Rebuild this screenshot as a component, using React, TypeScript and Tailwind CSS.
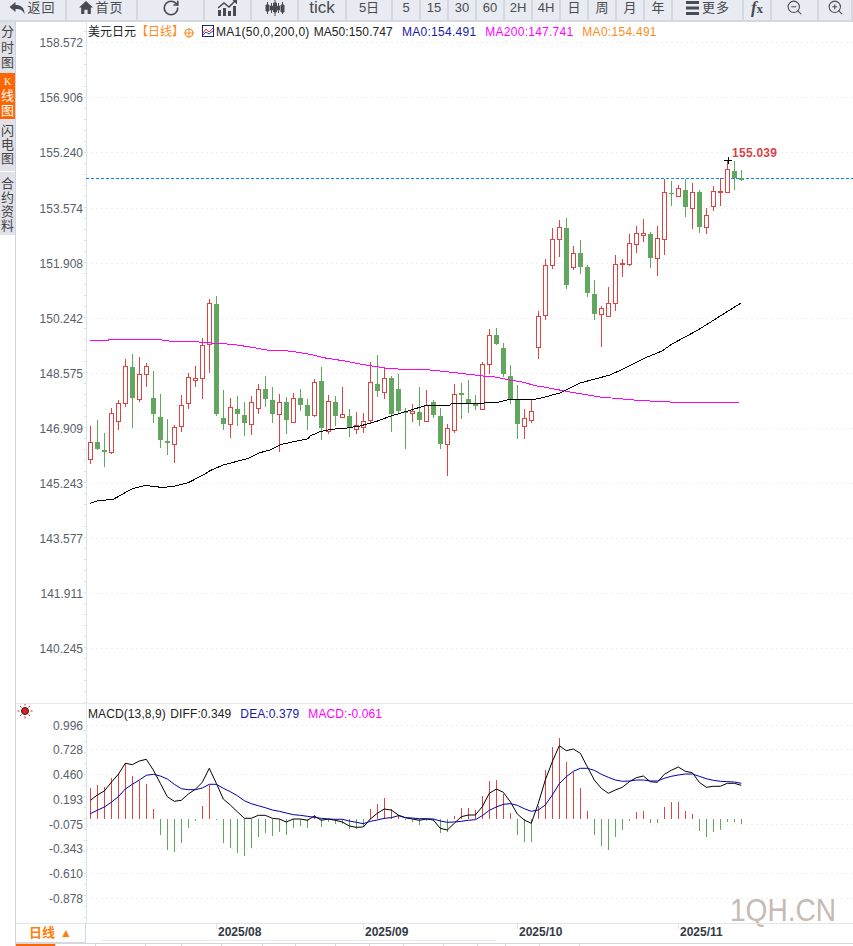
import type { ReactNode } from 'react';
import { RotateCw, ZoomIn, ZoomOut } from 'lucide-react';

const RED = '#dc4444';
const GREEN = '#62a75e';
const SANS = 'font-["Liberation_Sans","Noto_Sans_CJK_SC",sans-serif]';

// candle values are read off the picture: up/down, high, body top, body bottom, low
type Candle = [0 | 1, number, number, number, number];

const fromA = (rows: Candle[]): Candle[] =>
  rows.map(([c, h, t, b, l]) => [c, 290 + h / 3, 290 + t / 3, 290 + b / 3, 290 + l / 3]);
const fromB = (rows: Candle[]): Candle[] =>
  rows.map(([c, h, t, b, l]) => [c, 140 + h / 3, 140 + t / 3, 140 + b / 3, 140 + l / 3]);

const candles: Candle[] = [
  ...fromA([
    [1, 408, 457, 506, 522], [0, 390, 457, 477, 480], [0, 430, 481, 485, 530], [1, 355, 370, 485, 492],
    [1, 330, 340, 394, 420], [1, 207, 229, 340, 351], [0, 192, 232, 323, 414], [1, 201, 253, 328, 336],
    [1, 220, 229, 253, 291], [0, 243, 324, 371, 399], [0, 312, 381, 449, 474], [0, 387, 453, 458, 495],
    [1, 405, 412, 463, 519], [1, 315, 346, 409, 426], [1, 250, 262, 340, 357], [1, 228, 265, 269, 291],
    [1, 145, 166, 265, 327], [1, 27, 40, 163, 249], [0, 18, 42, 372, 378], [0, 300, 384, 401, 420],
    [1, 324, 352, 403, 444], [0, 318, 357, 371, 408], [0, 336, 375, 398, 438], [1, 318, 337, 401, 435],
    [1, 282, 298, 355, 372], [0, 258, 297, 326, 351], [0, 291, 330, 371, 399], [1, 312, 337, 371, 486],
    [0, 321, 336, 389, 432], [1, 309, 325, 395, 399], [0, 297, 324, 345, 363], [0, 327, 345, 378, 420],
    [1, 267, 277, 376, 381], [0, 231, 273, 414, 450], [1, 315, 334, 423, 432], [0, 318, 336, 378, 408],
    [1, 291, 373, 380, 381], [0, 357, 378, 414, 441], [1, 366, 406, 418, 432], [1, 369, 394, 412, 429],
    [1, 216, 277, 391, 399], [0, 195, 282, 303, 321], [1, 232, 265, 307, 327], [0, 258, 264, 372, 426],
    [0, 252, 297, 363, 372], [0, 354, 366, 367, 477], [1, 342, 363, 368, 396], [0, 291, 366, 390, 408],
    [1, 300, 345, 392, 396], [0, 330, 336, 375, 384], [0, 354, 378, 462, 477], [1, 402, 415, 461, 558],
    [1, 282, 313, 419, 429], [0, 279, 309, 315, 387], [0, 270, 327, 340, 370], [0, 315, 342, 348, 360],
    [1, 216, 222, 356, 356], [1, 117, 136, 223, 252], [0, 114, 135, 162, 165], [0, 159, 174, 252, 261],
    [0, 225, 258, 330, 342], [0, 285, 331, 402, 447], [1, 357, 385, 407, 447], [1, 330, 364, 389, 399],
  ]),
  ...fromB([
    [1, 513, 529, 622, 657], [1, 357, 376, 526, 540], [1, 264, 298, 374, 387], [1, 240, 262, 298, 351],
    [0, 234, 265, 435, 447], [1, 318, 340, 380, 390], [0, 300, 340, 380, 402], [0, 375, 381, 458, 471],
    [0, 420, 462, 522, 540], [1, 498, 505, 521, 621], [1, 441, 490, 527, 530], [1, 345, 373, 488, 513],
    [1, 357, 370, 373, 411], [1, 282, 310, 371, 378], [1, 258, 280, 313, 339], [1, 237, 280, 284, 306],
    [0, 276, 282, 354, 384], [1, 258, 295, 353, 408], [1, 118, 157, 296, 345], [0, 123, 160, 161, 198],
    [1, 135, 145, 167, 171], [0, 117, 151, 200, 231], [1, 129, 157, 203, 267], [0, 150, 156, 261, 279],
    [1, 204, 226, 260, 282], [1, 138, 154, 197, 213], [1, 114, 154, 155, 198], [1, 60, 88, 155, 159],
    [0, 63, 94, 115, 150], [0, 90, 115, 119, 123],
  ]),
];

const candleX = (i: number) => Math.floor(90.3 + i * 7.003) + 0.5;

const pts = (ox: number, oy: number, list: number[][]) =>
  list.map(([x, y]) => `${(ox + x / 3).toFixed(1)},${(oy + y / 3).toFixed(1)}`).join(' ');

const ma200 = [
  pts(85, 290, [[15, 151], [70, 151], [72, 148], [215, 148], [258, 154], [320, 154], [350, 157], [390, 160], [440, 163], [490, 170], [550, 181], [590, 181], [640, 187], [675, 193]]),
  pts(310, 290, [[0, 193], [50, 205], [100, 212], [150, 222], [230, 235], [280, 238], [340, 238], [400, 244], [450, 250], [520, 258], [550, 260], [600, 270], [640, 277], [680, 288], [690, 289]]),
  '570,392 600,397 640,400.5 680,402.5 741,402',
].join(' ');

const ma50 = [
  pts(85, 290, [[15, 640], [40, 632], [85, 628], [140, 597], [185, 585], [200, 590], [240, 592], [270, 588], [310, 578], [360, 552], [375, 542], [415, 525], [490, 505], [525, 488], [555, 480], [590, 463], [640, 452], [670, 446]]),
  pts(310, 290, [[0, 438], [30, 425], [65, 418], [110, 414], [150, 408], [200, 394], [240, 379], [280, 367], [310, 358], [345, 347], [420, 345], [425, 340], [520, 340], [530, 337], [565, 337], [590, 330], [630, 328], [660, 330], [690, 325]]),
  '560,393 580,383 610,375 623,369 645,358 662,351 672,344 698,330 725,313 741,303',
].join(' ');

// MACD bars, y in the crop's 3x scale; 372 is the zero line
const macdBars = [
  279, 270, 276, 249, 238, 205, 243, 258, 268, 342, 420, 465, 471, 444, 399, 378, 333, 270, 375, 444, 459, 474, 483,
  459, 426, 414, 423, 411, 420, 399, 393, 399, 360, 396, 381, 387, 387, 402, 402, 396, 342, 327, 309, 342, 360, 376,
  380, 390, 378, 378, 414, 411, 363, 339, 339, 345, 303, 258, 255, 297, 354, 420, 441, 441, 333, 225, 156, 129, 201,
  231, 279, 348, 420, 453, 465, 426, 405, 378, 351, 348, 384, 384, 336, 321, 321, 348, 357, 408, 426, 411, 405, 381,
  381, 387,
];

const diffA = [[271, 316], [292, 300], [313, 288], [334, 262], [355, 238], [376, 205], [397, 209], [418, 198], [439, 193], [460, 225], [481, 265], [502, 305], [523, 319], [544, 316], [565, 297], [586, 283], [607, 262], [628, 220], [649, 265], [670, 312], [691, 330], [712, 350], [733, 370], [754, 370], [775, 361], [796, 361], [817, 370], [838, 372], [859, 381], [880, 372], [901, 372], [922, 376], [943, 363], [964, 376], [985, 372], [1006, 376], [1027, 381], [1048, 393], [1069, 397], [1090, 396], [1111, 372], [1132, 355], [1153, 342], [1174, 345], [1195, 360]];
const diffB = [[16, 368], [37, 372], [58, 376], [79, 372], [100, 375], [121, 400], [142, 405], [163, 385], [184, 365], [205, 360], [226, 360], [247, 335], [268, 295], [289, 282], [310, 292], [331, 320], [352, 357], [373, 375], [394, 385], [415, 325], [436, 255], [457, 200], [478, 152], [499, 167], [520, 162], [541, 175], [562, 215], [583, 255], [604, 280], [625, 295], [646, 285], [667, 277], [688, 260], [709, 248], [730, 243], [751, 260], [772, 262], [793, 238], [814, 226], [835, 216], [856, 229], [877, 233], [898, 262], [919, 277], [940, 274], [961, 274], [982, 265], [1003, 265], [1024, 271]];
const deaA = [[271, 356], [292, 346], [313, 336], [334, 322], [355, 305], [376, 282], [397, 268], [418, 255], [439, 241], [460, 238], [481, 243], [502, 252], [523, 268], [544, 281], [565, 284], [586, 284], [607, 279], [628, 268], [649, 268], [670, 280], [691, 290], [712, 302], [733, 317], [754, 326], [775, 332], [796, 338], [817, 345], [838, 349], [859, 354], [880, 359], [901, 361], [922, 364], [943, 367], [964, 370], [985, 372], [1006, 373], [1027, 373], [1048, 378], [1069, 382], [1090, 386], [1111, 379], [1132, 375], [1153, 370], [1174, 368], [1195, 362]];
const deaB = [[16, 368], [37, 369], [58, 371], [79, 371], [100, 372], [121, 378], [142, 382], [163, 381], [184, 379], [205, 376], [226, 374], [247, 362], [268, 346], [289, 336], [310, 328], [331, 326], [352, 331], [373, 341], [394, 349], [415, 345], [436, 330], [457, 300], [478, 266], [499, 245], [520, 229], [541, 220], [562, 220], [583, 226], [604, 238], [625, 247], [646, 255], [667, 259], [688, 258], [709, 255], [730, 255], [751, 258], [772, 258], [793, 250], [814, 244], [835, 240], [856, 237], [877, 237], [898, 244], [919, 251], [940, 256], [961, 259], [982, 260], [1003, 261], [1024, 265]];

const priceAxis: [string, number][] = [
  ['158.572', 42.5], ['156.906', 97.5], ['155.240', 152.5], ['153.574', 208.5], ['151.908', 263.5], ['150.242', 318.5],
  ['148.575', 373.5], ['146.909', 428.5], ['145.243', 483.5], ['143.577', 538.5], ['141.911', 593.5], ['140.245', 648.5],
];
const macdAxis: [string, number][] = [
  ['0.996', 725.5], ['0.728', 749.5], ['0.460', 774.5], ['0.193', 799.5], ['-0.075', 824.5], ['-0.343', 848.5],
  ['-0.610', 873.5], ['-0.878', 898.5],
];

function ToolButton({ w, children }: { w: string; children: ReactNode }) {
  return (
    <div className={`${w} flex shrink-0 items-center justify-center gap-[2px] border-r-2 border-[#d6d8df] pb-[5px] text-[13px] text-[#4a4a50]`}>
      {children}
    </div>
  );
}

function Toolbar() {
  const periods = ['5', '15', '30', '60', '2H', '4H', '日', '周', '月', '年'];
  return (
    <div className={`flex h-[22px] shrink-0 overflow-hidden border-b-2 border-[#d6d8df] bg-[#e9ebf2] ${SANS}`}>
      <ToolButton w="w-[67px]">
        <svg width="16" height="12" viewBox="0 0 15 12" className="fill-[#4a4a55]">
          <path d="M0 5 6 0v3c5 0 9 2 9 9-2-4-4-5-9-5v3z" />
        </svg>
        <span className="tracking-[1px]">返回</span>
      </ToolButton>
      <ToolButton w="w-[71px]">
        <svg width="14" height="13" viewBox="0 0 13 12" className="fill-[#4a4a55]">
          <path d="M6.5 0 13 6h-2v6H8V8H5v4H2V6H0z" />
        </svg>
        <span className="tracking-[1px]">首页</span>
      </ToolButton>
      <ToolButton w="w-[67px]">
        <RotateCw size={18} strokeWidth={2.2} color="#4a4a55" />
      </ToolButton>
      <ToolButton w="w-[47px]">
        <svg width="19" height="16" viewBox="0 0 19 16" className="fill-[#4a4a55]">
          <path d="M0 10h3v6H0zM5 8h3v8H5zM10 11h3v5h-3zM15 6h3v10h-3z" />
          <path d="M0 8 6 3l5 4 6-6" fill="none" stroke="#4a4a55" strokeWidth="1.6" />
          <path d="M14.500 0H19v4.500z" />
        </svg>
      </ToolButton>
      <ToolButton w="w-[47px]">
        <svg width="20" height="16" viewBox="0 0 20 16" className="fill-[#4a4a55] stroke-[#4a4a55]">
          <path d="M2.500 2v12M10 0v16M17.500 2v12M6.500 3v10M13.500 3v10" strokeWidth="1" />
          <path d="M1 5h3v6H1zM8.500 3h3v9h-3zM16 5h3v7h-3zM5.500 6h2v4h-2zM12.500 6h2v4h-2z" />
        </svg>
      </ToolButton>
      <ToolButton w="w-[48px]">
        <span className="text-[17px] leading-[15px]">tick</span>
      </ToolButton>
      <ToolButton w="w-[46px]">5日</ToolButton>
      {periods.map((p) => (
        <ToolButton key={p} w="w-[28px]">
          {p}
        </ToolButton>
      ))}
      <ToolButton w="w-[71px]">
        <svg width="15" height="14" viewBox="0 0 15 14" className="fill-[#4a4a55]">
          <path d="M1 0h13v3H1zM1 5.500h13v3H1zM1 11h13v3H1z" />
        </svg>
        <span className="tracking-[1px]">更多</span>
      </ToolButton>
      <ToolButton w="w-[28px]">
        <span className="font-['Liberation_Serif',serif] text-[17px] leading-[15px] font-bold italic text-[#4a4a55]">
          f<span className="text-[13px] not-italic">x</span>
        </span>
      </ToolButton>
      <ToolButton w="w-[47px]">
        <ZoomOut size={17} strokeWidth={1.5} color="#4a4a55" />
      </ToolButton>
      <ToolButton w="w-[34px]">
        <ZoomIn size={17} strokeWidth={1.5} color="#4a4a55" />
      </ToolButton>
    </div>
  );
}

function Sidebar() {
  return (
    <div className={`flex w-[16px] shrink-0 flex-col border-r border-[#cfd3da] text-[13px] text-[#444] ${SANS}`}>
      <div className="flex h-[51px] flex-col items-center justify-center bg-[#e1e2e9] leading-[15.5px]">
        <span>分</span>
        <span>时</span>
        <span>图</span>
      </div>
      <div className="flex h-[46px] flex-col items-center justify-center bg-[#ff6600] leading-[15px] text-white">
        <span className="font-['Liberation_Serif',serif] text-[10px] leading-[13px]">K</span>
        <span>线</span>
        <span>图</span>
      </div>
      <div className="flex h-[52px] flex-col items-center justify-center bg-[#e1e2e9] leading-[14px]">
        <span>闪</span>
        <span>电</span>
        <span>图</span>
      </div>
      <div className="mt-[1px] flex h-[63px] flex-col items-center justify-center bg-[#e1e2e9] pt-[2px] leading-[14px]">
        <span>合</span>
        <span>约</span>
        <span>资</span>
        <span>料</span>
      </div>
    </div>
  );
}

function Legend() {
  return (
    <div className={`absolute top-0 left-[72px] flex h-[19px] items-center whitespace-nowrap text-[12px] text-[#222] ${SANS}`}>
      <span>美元日元</span>
      <span className="text-[#ff8c1a]">【日线】</span>
      <svg width="10" height="10" viewBox="0 0 10 10" className="mt-[3px]" fill="none" stroke="#ff8c1a" strokeWidth="1">
        <circle cx="5" cy="5" r="4" />
        <path d="M0 5h10M5 0v10" />
      </svg>
      <svg width="12" height="12" viewBox="0 0 12 12" className="mb-[2px] ml-[8px]" fill="#fff" stroke="#1a237e">
        <rect x=".5" y=".5" width="11" height="11" />
        <path d="M1 8 4 4l3 3 4-4" fill="none" stroke="#e33" />
        <path d="M1 10l3-3 3 2 4-3" fill="none" stroke="#33c" />
      </svg>
      <span className="ml-[2px] tracking-[0.28px]">MA1(50,0,200,0)</span>
      <span className="ml-[4px] tracking-[0.1px]">MA50:150.747</span>
      <span className="ml-[9px] tracking-[0.28px] text-[#1a1aa8]">MA0:154.491</span>
      <span className="ml-[9px] tracking-[0.25px] text-[#ff00ff]">MA200:147.741</span>
      <span className="ml-[9px] tracking-[0.28px] text-[#ff8c1a]">MA0:154.491</span>
    </div>
  );
}

function Axis({ rows, from, to }: { rows: [string, number][]; from: number; to: number }) {
  const ticks = [];
  for (let y = from; y < to; y += 11) ticks.push(y);
  return (
    <g>
      {rows.map(([label, y]) => (
        <g key={label}>
          <line x1="86" x2="853" y1={y} y2={y} stroke="#eceef0" strokeDasharray="2 3" />
          <text x="83" y={y + 4} textAnchor="end" fontSize="12" fill="#5a606a" fontFamily="Liberation Sans, sans-serif">
            {label}
          </text>
        </g>
      ))}
      {ticks.map((y) => (
        <line key={y} x1="83.500" x2="86" y1={y + 0.5} y2={y + 0.5} stroke="#dfe4ea" />
      ))}
    </g>
  );
}

function PriceChart() {
  return (
    <div className="relative h-[681px] shrink-0">
      <svg width="837" height="681" viewBox="16 22 837 681" className="block">
        <line x1="86.500" x2="86.500" y1="22" y2="703" stroke="#dde5ec" />
        <Axis rows={priceAxis} from={31} to={703} />
        <line x1="86" x2="853" y1="178.500" y2="178.500" stroke="#0a84ff" strokeDasharray="3 2" />
        {candles.map(([up, h, t, b, l], i) => {
          const x = candleX(i);
          const color = up ? RED : GREEN;
          const top = Math.round(t);
          const bh = Math.max(Math.round(b) - top, 1);
          return (
            <g key={i} shapeRendering="crispEdges">
              <line x1={x} x2={x} y1={Math.round(h)} y2={Math.round(l)} stroke={color} />
              {up ? (
                <rect x={x - 2} y={top + 0.5} width="4" height={bh} fill="#fff" stroke={color} />
              ) : (
                <rect x={x - 2.5} y={top} width="5" height={bh} fill={color} />
              )}
            </g>
          );
        })}
        <polyline points={ma200} fill="none" stroke="#ff00ff" shapeRendering="crispEdges" />
        <polyline points={ma50} fill="none" stroke="#000" shapeRendering="crispEdges" />
        <path d="M724 160.500h8M728.500 157v7" stroke="#000" />
        <text x="732" y="157" fontSize="12" fontWeight="700" textLength="45" fill={RED} fontFamily="Liberation Sans, sans-serif">
          155.039
        </text>
      </svg>
      <Legend />
    </div>
  );
}

function MacdChart() {
  return (
    <div className="relative h-[220px] shrink-0 border-t border-[#e3e7ec]">
      <svg width="837" height="219" viewBox="16 704 837 219" className="block">
        <line x1="86.500" x2="86.500" y1="704" y2="923" stroke="#dde5ec" />
        <Axis rows={macdAxis} from={730} to={923} />
        {macdBars.map((v, i) => {
          const x = candleX(i);
          return (
            <line key={i} x1={x} x2={x} y1={819} y2={Math.round(695 + v / 3)} stroke={v < 372 ? RED : GREEN} />
          );
        })}
        <polyline points={`${pts(0, 695, diffA)} ${pts(400, 695, diffB)}`} fill="none" stroke="#000" />
        <polyline points={`${pts(0, 695, deaA)} ${pts(400, 695, deaB)}`} fill="none" stroke="#0000a8" />
        {/* sun marker */}
        <g stroke="#e02020" strokeWidth="1">
          <circle cx="25" cy="711" r="3.500" fill="#e02020" stroke="#222" />
          <path d="M25 703.500v2M25 716.500v2M17.500 711h2M30.500 711h2M20 706l1.500 1.500M28.500 714.500l1.500 1.500M30 706l-1.500 1.500M21.500 714.500 20 716" />
        </g>
      </svg>
      <div className={`absolute top-[1px] left-[72px] flex h-[18px] items-center gap-[9px] whitespace-nowrap text-[12px] tracking-[0.1px] text-[#222] ${SANS}`}>
        <span>
          MACD(13,8,9) <span className="ml-[1px]">DIFF:0.349</span>
        </span>
        <span className="text-[#1a1aa8]">DEA:0.379</span>
        <span className="text-[#ff00ff]">MACD:-0.061</span>
      </div>
      {/* site watermark */}
      <span className="absolute top-[191px] left-[714px] origin-left scale-x-[0.906] font-['Liberation_Sans',sans-serif] text-[31px] leading-none whitespace-nowrap text-[#c6bbb3]">
        1QH.CN
      </span>
    </div>
  );
}

function TimeAxis() {
  const labels = [
    { w: 'w-[147px]', text: '2025/08' },
    { w: 'w-[154px]', text: '2025/09' },
    { w: 'w-[161px]', text: '2025/10' },
    { w: 'w-[100px]', text: '2025/11' },
  ];
  return (
    <div className={`relative flex h-[20px] shrink-0 border-t border-[#e1e6eb] ${SANS}`}>
      <div className="flex w-[70px] shrink-0 items-center justify-center gap-[5px] border-r border-b border-[#d5dae2] text-[13px] font-bold text-[#ff7f0e]">
        日线
        <span className="text-[12px]">▲</span>
      </div>
      <div className="w-[130px] shrink-0" />
      {labels.map((l) => (
        <div key={l.text} className={`${l.w} relative shrink-0 pl-[2px] text-[12px] leading-[17px] font-bold text-[#333a45]`}>
          <div className="absolute top-0 left-0 h-[5px] w-[1px] bg-[#dfe3e8]" />
          {l.text}
        </div>
      ))}
      {/* slider track under the dates */}
      <div className="absolute top-[16px] left-[85px] h-[1px] w-[395px] bg-[#e8eaee]" />
    </div>
  );
}

function BottomTabs() {
  const widths = ['w-[40px]', 'w-[40px]', 'w-[50px]', 'w-[36px]', 'w-[40px]', 'w-[41px]', 'w-[33px]', 'w-[40px]', 'w-[34px]', 'w-[34px]', 'w-[40px]', 'w-[34px]', 'w-[28px]', 'w-[34px]', 'w-[40px]'];
  return (
    <div className="flex h-[3px] shrink-0 overflow-hidden border-t border-[#d3d7de]">
      {widths.map((w, i) => (
        <div key={i} className={`${w} shrink-0 border-r border-[#d3d7de] ${i === 0 ? 'bg-[#ff6600]' : 'bg-white'}`} />
      ))}
    </div>
  );
}

export default function App() {
  return (
    <div className="flex h-[946px] w-[853px] flex-col overflow-hidden bg-white">
      <Toolbar />
      <div className="flex min-h-0 flex-1">
        <Sidebar />
        <div className="flex min-w-0 flex-1 flex-col">
          <PriceChart />
          <MacdChart />
          <TimeAxis />
          <BottomTabs />
        </div>
      </div>
    </div>
  );
}
